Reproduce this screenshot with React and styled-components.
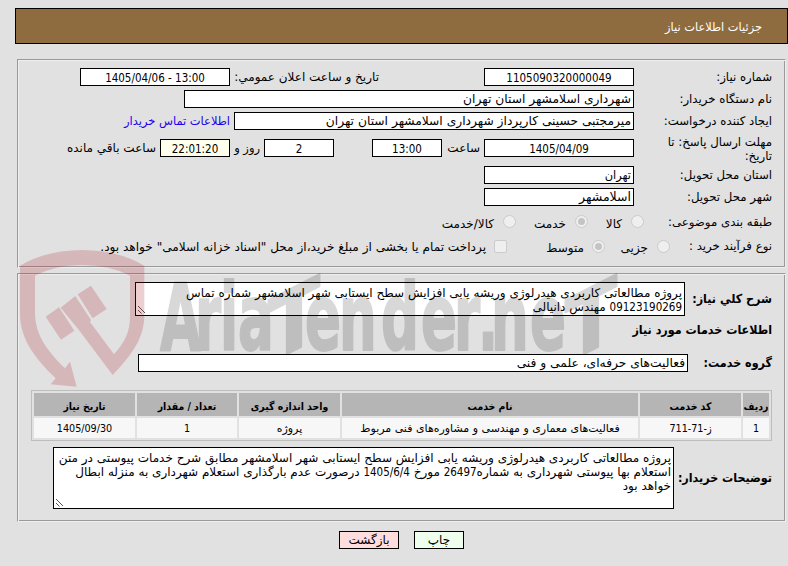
import styled, { createGlobalStyle } from "styled-components";

const GlobalStyle = createGlobalStyle`
	* {
		box-sizing: border-box;
	}
	body {
		margin: 0;
		background: #e1e1e1;
		color: #000;
		font-family: "DejaVu Sans", sans-serif;
		font-size: 12px;
		line-height: 14px;
		overflow: hidden;
	}
`;

const Page = styled.div`
	position: relative;
	width: 788px;
	height: 566px;
	padding-top: 8px;
	overflow: hidden;
`;

const Header = styled.header`
	display: flex;
	align-items: center;
	height: 36px;
	margin-left: 15px;
	padding: 2px 25px 0 0;
	border: 1px solid #000;
	background: #8f6c40;
	color: #fff;
	font-size: 11.4px;
`;

const Panel = styled.section`
	display: flex;
	flex-direction: column;
	height: ${(p) => p.$height}px;
	margin: ${(p) => p.$top}px 2px 0 17px;
	padding: ${(p) => p.$pad}px 12px 0 12px;
	border: 1px solid;
	border-color: #9a9a9a #eee #eee #9a9a9a;
	box-shadow: inset 1px 1px #eee, inset -1px -1px #9a9a9a;
`;

const Row = styled.div`
	display: flex;
	flex: none;
	align-items: center;
	height: ${(p) => p.$height || 18}px;
	margin-top: ${(p) => p.$top ?? 4}px;
	padding-right: 1px;
	white-space: nowrap;
`;

const Label = styled.div`
	flex: none;
	width: ${(p) => p.$width || 138}px;
	padding-top: ${(p) => (p.$wrap ? 2 : 0)}px;
	font-family: ${(p) => (p.$bold ? '"DejaVu Sans Condensed"' : '"DejaVu Sans"')}, sans-serif;
	font-weight: ${(p) => (p.$bold ? "bold" : "normal")};
	font-size: ${(p) => (p.$bold ? 12.4 : 11.75)}px;
	white-space: ${(p) => (p.$wrap ? "normal" : "nowrap")};
`;

const Field = styled.div`
	display: flex;
	flex: none;
	align-items: center;
	justify-content: ${(p) => (p.$center ? "center" : "flex-start")};
	width: ${(p) => p.$width || 150}px;
	height: 18px;
	margin-right: ${(p) => p.$gap || 0}px;
	padding: ${(p) => (p.$center ? 2 : 0)}px 2px 0;
	border: 1px solid #000;
	background: ${(p) => p.$color || "#fff"};
	font-size: ${(p) => p.$size || 12.25}px;
`;

const Num = styled.span`
	font-family: "DejaVu Sans Condensed", "DejaVu Sans", sans-serif;
	font-size: 11.5px;
`;

const Text = styled.span`
	flex: none;
	width: ${(p) => (p.$width ? p.$width + "px" : "auto")};
	margin-right: ${(p) => p.$gap || 4}px;
	padding-top: ${(p) => p.$drop || 0}px;
	font-size: ${(p) => p.$size || 12}px;
`;

const ContactLink = styled(Text)`
	color: #2200ee;
	font-size: 11.45px;
`;

const Radio = styled.span`
	display: flex;
	flex: none;
	align-items: center;
	justify-content: center;
	width: 13px;
	height: 13px;
	margin-right: ${(p) => p.$gap || 0}px;
	border: 1px solid #cbcbcb;
	border-radius: 50%;
	background: #efefef;
	&::after {
		content: "";
		width: 7px;
		height: 7px;
		border-radius: 50%;
		background: ${(p) => (p.$checked ? "#c4c4c4" : "transparent")};
	}
`;

const Checkbox = styled(Radio)`
	border-radius: 2px;
`;

const TextBox = styled.div`
	position: relative;
	flex: none;
	width: ${(p) => p.$width}px;
	height: ${(p) => p.$height}px;
	padding: 3px 2px 0;
	border: 1px solid #000;
	background: #fff;
	line-height: 14px;
`;

const Line = styled.div`
	height: 14px;
	font-size: ${(p) => p.$size || 12}px;
`;

const Grip = styled.svg`
	position: absolute;
	left: 1px;
	bottom: 1px;
`;

const Table = styled.div`
	display: grid;
	flex: none;
	grid-template-columns: 26px 101px 296px 101px 100px 101px;
	grid-template-rows: 23px 20px;
	gap: 2px;
	width: 741px;
	height: 51px;
	margin: 18px 1px 0 0;
	padding: 2px;
	border: 1px solid #bdbdbd;
`;

const Cell = styled.div`
	display: flex;
	align-items: center;
	justify-content: center;
	padding-top: 2px;
	background: ${(p) => (p.$head ? "#b5b5b5" : "#f7f7f7")};
	font-family: ${(p) => (p.$head ? '"DejaVu Sans Condensed"' : '"DejaVu Sans"')}, sans-serif;
	font-weight: ${(p) => (p.$head ? "bold" : "normal")};
	font-size: ${(p) => (p.$head ? 10.4 : 11)}px;
	white-space: nowrap;
`;

const Small = styled(Num)`
	font-size: 10.7px;
`;

const Actions = styled.div`
	display: flex;
	gap: 15px;
	margin: 9px 324px 0 0;
`;

const Button = styled.button`
	width: ${(p) => p.$width}px;
	height: 18px;
	padding: 0;
	border: 1px solid #000;
	background: ${(p) => p.$color};
	color: #000;
	font-family: "DejaVu Sans", sans-serif;
	font-size: 12px;
	line-height: 14px;
`;

const Watermark = styled.svg`
	position: absolute;
	left: 0;
	top: 0;
	pointer-events: none;
	direction: ltr;
	text {
		font-family: "DejaVu Sans Condensed", "DejaVu Sans", sans-serif;
		font-weight: bold;
		font-size: 92px;
		stroke: #000;
		stroke-width: 2px;
		stroke-linejoin: round;
	}
`;

const heads = ["ردیف", "کد خدمت", "نام خدمت", "واحد اندازه گیری", "تعداد / مقدار", "تاریخ نیاز"];

// left edge of every letter in the wordmark
const letters = [
	["A", 160], ["r", 195], ["i", 220], ["a", 238], ["e", 305], ["n", 339], ["d", 381],
	["e", 421], ["r", 454], [".", 478], ["n", 491], ["e", 530],
];

function ResizeGrip() {
	return (
		<Grip width="9" height="9" viewBox="0 0 9 9">
			<path d="M1 1l7 7M1 5l3.500 3.500" stroke="#555" strokeWidth="1" fill="none" />
		</Grip>
	);
}

function Brand() {
	return (
		<Watermark width="788" height="566" viewBox="0 0 788 566">
			<g transform="translate(10 240) scale(.3333)" fill="#af141e" opacity=".2">
				<path d="M30 77Q110 30 217 30Q323 30 403 77V225C403 295 365 345 308 405L205 268L152 203L196 168L243 240L240 246L312 343C345 305 360 275 360 230V107Q300 75 217 75Q135 75 75 107V215C75 285 110 330 165 385L180 365L200 440L122 433L137 415C65 345 30 290 30 220Z" />
				<path d="M107 230L147 202L193 272L153 299ZM203 163L243 137L290 207L248 235Z" />
			</g>
			<g opacity=".15">
				{letters.map(([char, x]) => (
					<text key={x} transform={`translate(${x} 350) scale(.64 1)`}>{char}</text>
				))}
				<text transform="translate(268 364) skewY(-27) scale(.92 .95)">T</text>
				<text transform="translate(565 364) skewY(-27) scale(.92 .95)">T</text>
			</g>
		</Watermark>
	);
}

export default function App() {
	return (
		<Page dir="rtl" lang="fa">
			<GlobalStyle />
			<Header>جزئیات اطلاعات نیاز</Header>

			<Panel $top={15} $height={209} $pad={8}>
				<Row $top={0}>
					<Label>شماره نیاز:</Label>
					<Field $center><Num>1105090320000049</Num></Field>
					<Text $gap={105} $width={145}>تاریخ و ساعت اعلان عمومي:</Text>
					<Field $center $gap={4}><Num dir="ltr">1405/04/06 - 13:00</Num></Field>
				</Row>
				<Row>
					<Label>نام دستگاه خریدار:</Label>
					<Field $width={450}>شهرداری اسلامشهر استان تهران</Field>
				</Row>
				<Row>
					<Label>ایجاد کننده درخواست:</Label>
					<Field $width={400}>میرمجتبی حسینی کارپرداز شهرداری اسلامشهر استان تهران</Field>
					<ContactLink>اطلاعات تماس خریدار</ContactLink>
				</Row>
				<Row $top={4} $height={28}>
					<Label $wrap>مهلت ارسال پاسخ: تا<br />تاریخ:</Label>
					<Field $center><Num dir="ltr">1405/04/09</Num></Field>
					<Text $width={34}>ساعت</Text>
					<Field $center $gap={4} $width={70}><Num>13:00</Num></Field>
					<Field $center $gap={38} $width={70}><Num>2</Num></Field>
					<Text $width={26} $size={11.5}>روز و</Text>
					<Field $center $gap={4} $width={70} $color="#ffffee"><Num>22:01:20</Num></Field>
					<Text>ساعت باقي مانده</Text>
				</Row>
				<Row>
					<Label>استان محل تحویل:</Label>
					<Field $size={11.4}>تهران</Field>
				</Row>
				<Row>
					<Label>شهر محل تحویل:</Label>
					<Field $size={12.5}>اسلامشهر</Field>
				</Row>
				<Row $top={6} $height={19}>
					<Label $width={128}>طبقه بندی موضوعی:</Label>
					<Radio />
					<Text $gap={9} $width={17} $drop={4}>کالا</Text>
					<Radio $gap={17} $checked />
					<Text $gap={9} $width={31} $drop={4}>خدمت</Text>
					<Radio $gap={19} />
					<Text $gap={9} $drop={4}>کالا/خدمت</Text>
				</Row>
				<Row $top={5} $height={20}>
					<Label $width={102}>نوع فرآیند خرید :</Label>
					<Radio />
					<Text $gap={9} $width={28} $drop={4}>جزیی</Text>
					<Radio $gap={15} $checked />
					<Text $gap={8} $width={37} $drop={4}>متوسط</Text>
					<Checkbox $gap={40} />
					<Text $gap={8} $size={12.1} $drop={2}>پرداخت تمام یا بخشی از مبلغ خرید،از محل "اسناد خزانه اسلامی" خواهد بود.</Text>
				</Row>
			</Panel>

			<Panel $top={5} $height={249} $pad={8}>
				<Row $top={0} $height={34}>
					<Label $bold $width={87}>شرح كلي نياز:</Label>
					<TextBox $width={550} $height={34}>
						<Line>پروژه مطالعاتی کاربردی هیدرلوژی وریشه یابی افزایش سطح ایستابی شهر اسلامشهر شماره تماس</Line>
						<Line><Num>09123190269</Num> مهندس دانیالی</Line>
						<ResizeGrip />
					</TextBox>
				</Row>
				<Row $height={20}>
					<Label $bold>اطلاعات خدمات مورد نیاز</Label>
				</Row>
				<Row $top={14}>
					<Label $bold $width={84}>گروه خدمت:</Label>
					<Field $width={550}>فعالیت‌های حرفه‌ای، علمی و فنی</Field>
				</Row>
				<Table>
					{heads.map((head) => <Cell key={head} $head>{head}</Cell>)}
					<Cell><Small>1</Small></Cell>
					<Cell><Small>ز-71-711</Small></Cell>
					<Cell>فعالیت‌های معماری و مهندسی و مشاوره‌های فنی مربوط</Cell>
					<Cell>پروژه</Cell>
					<Cell><Small>1</Small></Cell>
					<Cell><Small>1405/09/30</Small></Cell>
				</Table>
				<Row $top={6} $height={62}>
					<Label $bold $width={98}>توضیحات خریدار:</Label>
					<TextBox $width={621} $height={62}>
						<Line $size={12.05}>پروژه مطالعاتی کاربردی هیدرلوژی وریشه یابی افزایش سطح ایستابی شهر اسلامشهر مطابق شرح خدمات پیوستی در متن</Line>
						<Line>استعلام بها پیوستی شهرداری به شماره<Num>26497</Num> مورخ <Num>1405/6/4</Num> درصورت عدم بارگذاری استعلام شهرداری به منزله ابطال</Line>
						<Line>خواهد بود</Line>
						<ResizeGrip />
					</TextBox>
				</Row>
			</Panel>

			<Actions>
				<Button $width={50} $color="#eeffee">چاپ</Button>
				<Button $width={60} $color="#ffdddd">بازگشت</Button>
			</Actions>
			<Brand />
		</Page>
	);
}
